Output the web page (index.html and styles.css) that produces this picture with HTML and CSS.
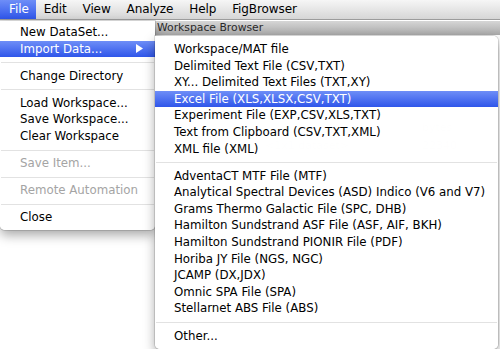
FILE: index.html
```html
<!DOCTYPE html>
<html lang="en">
<head>
  <meta charset="UTF-8"/>
  <title>FigBrowser - Import Data</title>
  <link rel="stylesheet" href="styles.css">
</head>
<body>
  <!-- Barra de menú -->
  <div class="menubar">
    <span class="open">File</span>
    <span>Edit</span>
    <span>View</span>
    <span>Analyze</span>
    <span>Help</span>
    <span>FigBrowser</span>
  </div>

  <div class="desktop">
    <!-- Ventana de fondo -->
    <div class="window">
      <div class="titlebar">Workspace Browser</div>
      <div class="win-body">
        <div class="row"><span class="c1"></span><span class="c2">bytes</span></div>
        <div class="row"><span class="c1">&lt;1x1 dataset&gt;</span><span class="c2">22340</span></div>
      </div>
    </div>

    <!-- Menú File -->
    <ul class="menu file-menu">
      <li>New DataSet...</li>
      <li class="sel has-sub">Import Data...
        <svg class="arrow" width="7" height="9" viewBox="0 0 7 9"><polygon points="0,0 7,4.5 0,9" fill="#fff"/></svg>
      </li>
      <li class="sep"></li>
      <li>Change Directory</li>
      <li class="sep"></li>
      <li>Load Workspace...</li>
      <li>Save Workspace...</li>
      <li>Clear Workspace</li>
      <li class="sep"></li>
      <li class="off">Save Item...</li>
      <li class="sep"></li>
      <li class="off">Remote Automation</li>
      <li class="sep"></li>
      <li>Close</li>
    </ul>

    <!-- Submenú Import Data -->
    <ul class="menu sub-menu">
      <li>Workspace/MAT file</li>
      <li>Delimited Text File (CSV,TXT)</li>
      <li>XY... Delimited Text Files (TXT,XY)</li>
      <li class="sel">Excel File (XLS,XLSX,CSV,TXT)</li>
      <li>Experiment File (EXP,CSV,XLS,TXT)</li>
      <li>Text from Clipboard (CSV,TXT,XML)</li>
      <li>XML file (XML)</li>
      <li class="sep"></li>
      <li>AdventaCT MTF File (MTF)</li>
      <li>Analytical Spectral Devices (ASD) Indico (V6 and V7)</li>
      <li>Grams Thermo Galactic File (SPC, DHB)</li>
      <li>Hamilton Sundstrand ASF File (ASF, AIF, BKH)</li>
      <li>Hamilton Sundstrand PIONIR File (PDF)</li>
      <li>Horiba JY File (NGS, NGC)</li>
      <li>JCAMP (DX,JDX)</li>
      <li>Omnic SPA File (SPA)</li>
      <li>Stellarnet ABS File (ABS)</li>
      <li class="sep"></li>
      <li>Other...</li>
    </ul>
  </div>
</body>
</html>
```

FILE: styles.css
```css
/* Reset */
* { box-sizing: border-box; margin: 0; padding: 0; }

body {
  width: 500px;
  height: 349px;
  overflow: hidden;
  background: #fff;
  color: #000;
  font-family: 'DejaVu Sans', sans-serif;
  font-size: 12px;
}

/* Barra de menú */
.menubar {
  display: flex;
  height: 20px;
  background: linear-gradient(#f6f6f6, #d6d6d6);
  border-bottom: 1px solid #9c9c9c;
}
.menubar span {
  padding: 0 8px;
  line-height: 19px;
  letter-spacing: -0.1px;
}
.menubar .open {
  padding: 0 7px 0 9px;
  color: #fff;
  background: linear-gradient(#6e8ef7, #2f56ea);
}

/* Escritorio y ventana de fondo */
.desktop {
  position: relative;
  height: 329px;
}
.window {
  margin: 1px 0 0 150px;
}
.titlebar {
  height: 14px;
  line-height: 14px;
  padding-left: 7px;
  font-size: 10.8px;
  color: #2a2a2a;
  background: linear-gradient(#d6d6d6, #a9a9a9);
}
.win-body {
  padding: 86px 0 0 115px;
  color: #c8c8c8;
  font-size: 11px;
}
.win-body .row {
  display: flex;
  height: 18px;
}
.win-body .c1 { width: 157px; }

/* Menús */
.menu {
  position: absolute;
  list-style: none;
  background: rgba(255, 255, 255, 0.98);
  box-shadow: 0 0 0 1px rgba(0, 0, 0, 0.12), 0 5px 12px rgba(0, 0, 0, 0.35);
  font-size: 11.8px;
}
.menu li {
  height: 16.6px;
  line-height: 16.6px;
  padding-left: 20px;
  white-space: nowrap;
}
.menu li.sel {
  color: #fff;
  background: linear-gradient(#6e8ef7, #2f56ea);
}
.menu li.off { color: #a4a4a4; }
.menu li.sep {
  height: 10.5px;
  position: relative;
}
.menu li.sep::after {
  content: '';
  position: absolute;
  left: 1px;
  right: 1px;
  top: 5px;
  height: 1px;
  background: #e2e2e2;
}
.menu li.has-sub {
  display: flex;
  justify-content: space-between;
  align-items: center;
  padding-right: 12px;
}

.file-menu {
  left: 0;
  top: 0;
  width: 155px;
  padding: 3px 0 4px;
  border-radius: 0 0 5px 5px;
}
.sub-menu {
  left: 155px;
  top: 15px;
  width: 343px;
  padding: 5px 0;
  border-radius: 0 5px 5px 5px;
}
.sub-menu li { padding-left: 19px; }
```
